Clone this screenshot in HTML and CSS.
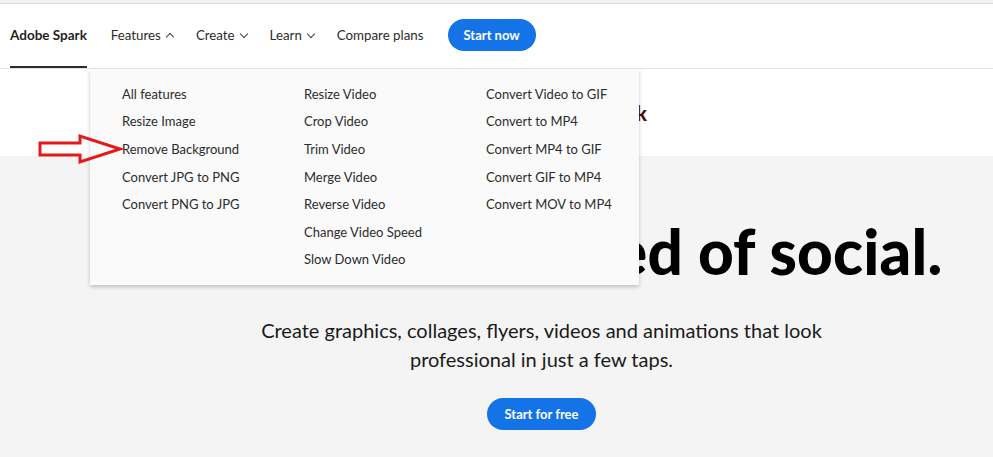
FILE: index.html
```html
<!DOCTYPE HTML>
<html lang="en">
<head>
    <meta charset="UTF-8">
    <meta name="viewport" content="width=device-width, initial-scale=1.0">
    <title>Adobe Spark</title>
    <link rel="stylesheet" href="styles.css">
</head>
<body>
    <div class="top-strip"></div>

    <header class="top-nav">
        <a href="#" class="nav-brand">Adobe Spark</a>
        <nav class="nav-links">
            <a href="#" class="nav-link">Features <span class="chev chev-up"></span></a>
            <a href="#" class="nav-link">Create <span class="chev"></span></a>
            <a href="#" class="nav-link">Learn <span class="chev"></span></a>
            <a href="#" class="nav-link">Compare plans</a>
        </nav>
        <a href="#" class="btn-blue nav-cta">Start now</a>
    </header>

    <div class="features-menu">
        <ul class="menu-col">
            <li><a href="#">All features</a></li>
            <li><a href="#">Resize Image</a></li>
            <li><a href="#">Remove Background</a></li>
            <li><a href="#">Convert JPG to PNG</a></li>
            <li><a href="#">Convert PNG to JPG</a></li>
        </ul>
        <ul class="menu-col">
            <li><a href="#">Resize Video</a></li>
            <li><a href="#">Crop Video</a></li>
            <li><a href="#">Trim Video</a></li>
            <li><a href="#">Merge Video</a></li>
            <li><a href="#">Reverse Video</a></li>
            <li><a href="#">Change Video Speed</a></li>
            <li><a href="#">Slow Down Video</a></li>
        </ul>
        <ul class="menu-col">
            <li><a href="#">Convert Video to GIF</a></li>
            <li><a href="#">Convert to MP4</a></li>
            <li><a href="#">Convert MP4 to GIF</a></li>
            <li><a href="#">Convert GIF to MP4</a></li>
            <li><a href="#">Convert MOV to MP4</a></li>
        </ul>
    </div>

    <!-- red annotation arrow -->
    <svg class="annot-arrow" width="90" height="32" viewBox="0 0 90 32">
        <path d="M2 10 H42 V3 L82 16 L42 29 V22 H2 Z" fill="none" stroke="#e3191b" stroke-width="3" stroke-linejoin="miter"/>
    </svg>

    <main>
        <section class="brand-band">
            <span class="brand-title">Adobe Spark</span>
        </section>

        <section class="hero">
            <h1>Made for the speed of social.</h1>
            <p>Create graphics, collages, flyers, videos and animations that look professional in just a few taps.</p>
            <a href="#" class="btn-blue hero-cta">Start for free</a>
        </section>
    </main>
</body>
</html>
```

FILE: styles.css
```css
:root {
    --blue: #1473e6;
    --text: #2c2c2c;
    --gray-bg: #f4f4f4;
    --line: #e6e6e6;
}

body {
    margin: 0;
    font-family: Lato, "Open Sans", sans-serif;
    color: var(--text);
    background-color: var(--gray-bg);
}

a {
    color: inherit;
    text-decoration: none;
}

.top-strip {
    height: 3px;
    background-color: #f2f2f2;
    border-bottom: 1px solid #d8d8d8;
}

.top-nav {
    display: flex;
    align-items: center;
    box-sizing: border-box;
    height: 65px;
    padding-left: 10px;
    padding-bottom: 2px;
    background-color: #ffffff;
    border-bottom: 1px solid var(--line);
}

.nav-brand {
    position: relative;
    display: flex;
    align-items: center;
    align-self: stretch;
    font-size: 13.5px;
    font-weight: 700;
    color: #1f1f1f;
}

.nav-brand:after {
    content: "";
    position: absolute;
    left: 0;
    right: 0;
    bottom: -2px;
    height: 2px;
    background-color: #2c2c2c;
}

.nav-links {
    display: flex;
    align-items: center;
    gap: 23px;
    margin-left: 24px;
}

.nav-link {
    display: flex;
    align-items: center;
    font-size: 13.3px;
}

.chev {
    display: inline-block;
    width: 5px;
    height: 5px;
    margin-left: 6px;
    border-right: 1px solid #444;
    border-bottom: 1px solid #444;
    transform: translateY(-1px) rotate(45deg);
}

.chev-up {
    transform: translateY(2px) rotate(-135deg);
}

.btn-blue {
    display: inline-flex;
    align-items: center;
    justify-content: center;
    height: 32px;
    padding: 0 16px;
    border-radius: 16px;
    background-color: var(--blue);
    color: #ffffff;
    font-size: 13px;
    font-weight: 700;
}

.nav-cta {
    margin-left: 24px;
}

.features-menu {
    position: absolute;
    top: 69px;
    left: 90px;
    width: 517px;
    display: flex;
    padding: 11px 0 12px 32px;
    background-color: #fafafa;
    box-shadow: 0 2px 4px rgba(0, 0, 0, 0.22);
    z-index: 10;
}

.menu-col {
    list-style: none;
    margin: 0;
    padding: 0;
    width: 182px;
    flex-shrink: 0;
}

.menu-col:last-child {
    width: auto;
    flex: 1;
}

.menu-col li {
    height: 27.6px;
    display: flex;
    align-items: center;
    font-size: 13px;
}

.annot-arrow {
    position: absolute;
    top: 133px;
    left: 38px;
    z-index: 20;
}

.brand-band {
    height: 87px;
    background-color: #ffffff;
    display: flex;
    align-items: center;
    justify-content: center;
}

.brand-title {
    margin-left: 186px;
    font-size: 20px;
    font-weight: 900;
    color: #4b0d0d;
}

.hero {
    display: flex;
    flex-direction: column;
    align-items: center;
    text-align: center;
    padding-top: 62px;
    padding-left: 90px;
}

.hero h1 {
    margin: 0;
    font-size: 62px;
    font-weight: 900;
    line-height: 66px;
    color: #000000;
    letter-spacing: 0.2px;
    white-space: nowrap;
}

.hero p {
    max-width: 600px;
    margin: 32px 0 0;
    font-size: 20px;
    line-height: 29px;
    color: #1a1a1a;
}

.hero-cta {
    margin-top: 24px;
    padding: 0 17px;
}
```
